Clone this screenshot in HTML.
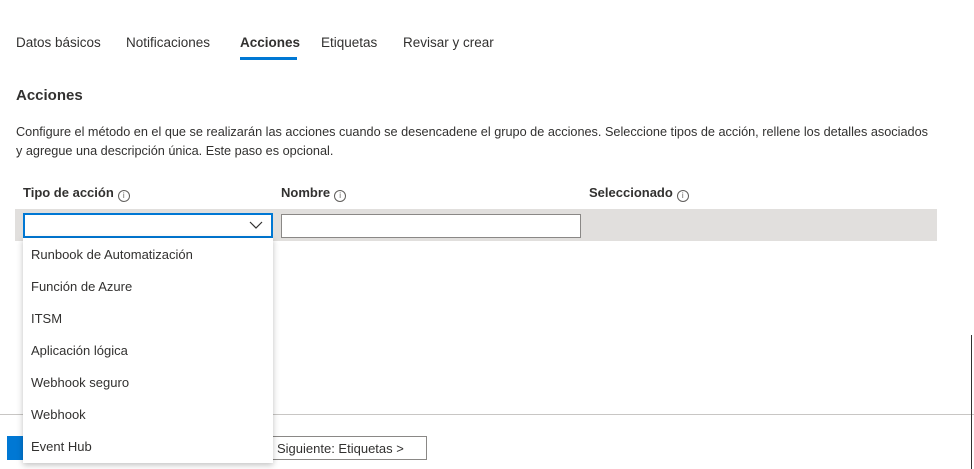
<!DOCTYPE html>
<html><head><meta charset="utf-8"><style>
*{margin:0;padding:0;box-sizing:border-box}
body{width:974px;height:469px;background:#fff;font-family:"Liberation Sans",sans-serif;color:#323130;font-size:13px;position:relative;overflow:hidden}
.a{position:absolute;white-space:nowrap}
.i{display:inline-block;width:12px;height:12px;border:1px solid #605e5c;border-radius:50%;font-size:8px;line-height:10px;text-align:center;vertical-align:-1px;margin-left:4px;color:#605e5c;font-weight:normal}
.opt{position:absolute;left:31px;font-size:13px}
.t{font-size:13.5px;top:35px}
</style></head><body>
<div class="a t" style="left:16px">Datos básicos</div>
<div class="a t" style="left:126px">Notificaciones</div>
<div class="a t" style="left:240px;font-weight:bold">Acciones</div>
<div class="a" style="left:240px;top:57px;width:57px;height:3px;background:#0078d4"></div>
<div class="a t" style="left:321px">Etiquetas</div>
<div class="a t" style="left:403px">Revisar y crear</div>
<div class="a" style="left:16px;top:87px;font-size:15px;font-weight:bold">Acciones</div>
<div class="a" style="left:16px;top:123px;line-height:19px;font-size:12.7px">Configure el método en el que se realizarán las acciones cuando se desencadene el grupo de acciones. Seleccione tipos de acción, rellene los detalles asociados<br>y agregue una descripción única. Este paso es opcional.</div>
<div class="a" style="left:23px;top:185px;font-weight:bold">Tipo de acción<span class="i">i</span></div>
<div class="a" style="left:281px;top:185px;font-weight:bold">Nombre<span class="i">i</span></div>
<div class="a" style="left:589px;top:185px;font-weight:bold">Seleccionado<span class="i">i</span></div>
<div class="a" style="left:15px;top:209px;width:922px;height:32px;background:#e1dfdd"></div>
<div class="a" style="left:23px;top:213px;width:250px;height:25px;background:#fff;border:2px solid #0078d4"></div>
<svg class="a" style="left:249px;top:220px" width="14" height="10"><path d="M1 2 L7 8 L13 2" fill="none" stroke="#323130" stroke-width="1.2"/></svg>
<div class="a" style="left:281px;top:214px;width:300px;height:24px;background:#fff;border:1px solid #8a8886"></div>
<div class="a" style="left:0;top:414px;width:974px;height:1px;background:#c8c6c4"></div>
<div class="a" style="left:971px;top:335px;width:1px;height:134px;background:#323130"></div>
<div class="a" style="left:7px;top:436px;width:30px;height:24px;background:#0078d4"></div>
<div class="a" style="left:265px;top:436px;width:162px;height:24px;border:1px solid #8a8886;background:#fff;padding:4px 0 0 11px">Siguiente: Etiquetas &gt;</div>
<div class="a" style="left:23px;top:238px;width:250px;height:225px;background:#fff;box-shadow:0 2px 6px rgba(0,0,0,.25)"></div>
<div class="opt" style="top:247px">Runbook de Automatización</div>
<div class="opt" style="top:279px">Función de Azure</div>
<div class="opt" style="top:311px">ITSM</div>
<div class="opt" style="top:343px">Aplicación lógica</div>
<div class="opt" style="top:375px">Webhook seguro</div>
<div class="opt" style="top:407px">Webhook</div>
<div class="opt" style="top:439px">Event Hub</div>
</body></html>
